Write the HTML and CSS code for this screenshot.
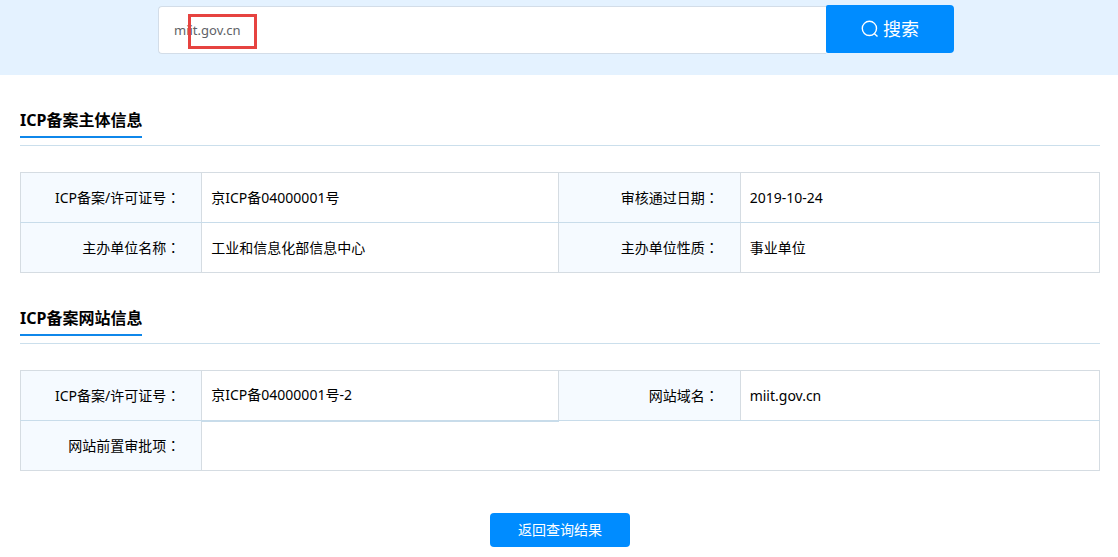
FILE: index.html
```
<!DOCTYPE html>
<html lang="zh-CN">
<head>
<meta charset="utf-8">
<title>ICP备案查询</title>
<link rel="stylesheet" href="styles.css">
</head>
<body>
<header class="search-bar">
  <form class="search-form">
    <input class="search-input" type="text" value="miit.gov.cn" aria-label="搜索">
    <button class="search-button" type="button">
      <svg class="search-icon" viewBox="0 0 18 18" aria-hidden="true"><circle cx="8.4" cy="8.4" r="7.1"/><path d="M13.2 13.4l3.3 3.2"/></svg>
      <span>搜索</span>
    </button>
    <span class="highlight"></span>
  </form>
</header>
<main class="content">
  <section class="block">
    <div class="block-head"><h2 class="block-title">ICP备案主体信息</h2></div>
    <table class="info">
      <colgroup><col class="col-label"><col class="col-value"><col class="col-label"><col></colgroup>
      <tr>
        <th scope="row">ICP备案/许可证号<span class="colon" lang="zh-TW">：</span></th><td>京ICP备04000001号</td>
        <th scope="row">审核通过日期<span class="colon" lang="zh-TW">：</span></th><td>2019-10-24</td>
      </tr>
      <tr>
        <th scope="row">主办单位名称<span class="colon" lang="zh-TW">：</span></th><td>工业和信息化部信息中心</td>
        <th scope="row">主办单位性质<span class="colon" lang="zh-TW">：</span></th><td>事业单位</td>
      </tr>
    </table>
  </section>
  <section class="block">
    <div class="block-head"><h2 class="block-title">ICP备案网站信息</h2></div>
    <table class="info">
      <colgroup><col class="col-label"><col class="col-value"><col class="col-label"><col></colgroup>
      <tr>
        <th scope="row">ICP备案/许可证号<span class="colon" lang="zh-TW">：</span></th><td class="thick">京ICP备04000001号-2</td>
        <th scope="row">网站域名<span class="colon" lang="zh-TW">：</span></th><td>miit.gov.cn</td>
      </tr>
      <tr>
        <th scope="row">网站前置审批项<span class="colon" lang="zh-TW">：</span></th><td colspan="3"></td>
      </tr>
    </table>
  </section>
  <div class="actions"><button class="back-button" type="button">返回查询结果</button></div>
</main>
</body>
</html>
```
FILE: styles.css
```
* { box-sizing: border-box; }
body {
  margin: 0;
  background: #fff;
  color: #000;
  font: 14px/20px "Noto Sans", "Noto Sans CJK SC", sans-serif;
}
button, input { font: inherit; }
.search-bar {
  padding: 5px 6px 21px 0;
  background: #e4f2ff;
}
.search-form {
  position: relative;
  display: flex;
  align-items: stretch;
  max-width: 796px;
  margin: 0 auto;
}
.search-input {
  flex: 1;
  min-width: 0;
  height: 48px;
  margin-top: 1px;
  padding: 0 15px;
  border: 1px solid #d3dde8;
  border-right: 0;
  border-radius: 4px 0 0 4px;
  background: #fff;
  color: #606266;
  font-size: 13px;
  outline: 0;
}
.search-button {
  display: flex;
  align-items: center;
  justify-content: center;
  gap: 4px;
  width: 128px;
  height: 48px;
  padding: 0;
  border: 0;
  border-radius: 2px 4px 4px 2px;
  background: #008cff;
  color: #fff;
  font-size: 18px;
  line-height: 24px;
}
.search-icon {
  width: 18px;
  height: 18px;
  fill: none;
  stroke: #fff;
  stroke-width: 1.4;
}
.highlight {
  position: absolute;
  left: 30px;
  top: 9px;
  width: 69px;
  height: 35px;
  border: 3px solid #e64340;
  pointer-events: none;
}
.content { padding: 26px 18px 10px 20px; }
.block { margin-bottom: 26px; }
.block-head {
  display: flex;
  height: 45px;
  margin-bottom: 26px;
  border-bottom: 1px solid #cbdfec;
}
.block-title {
  height: 37px;
  margin: 0;
  padding-top: 7px;
  border-bottom: 2px solid #0f87ea;
  font-size: 16px;
  line-height: 24px;
}
.info {
  width: 100%;
  table-layout: fixed;
  border-collapse: collapse;
}
.col-label { width: 16.8%; }
.col-value { width: 33.1%; }
.info th, .info td {
  height: 50px;
  border: 1px solid #d5dce2;
  font-weight: 400;
}
.info tr:first-child > * { border-bottom-color: #c8dcea; }
.info th {
  padding: 0 21px 0 0;
  background: #f5faff;
  text-align: right;
}
.info td {
  padding: 0 9px;
  text-align: left;
}
.info .thick { border-bottom-width: 2px; }
.colon { font-family: "Noto Sans CJK TC", sans-serif; }
.actions {
  display: flex;
  justify-content: center;
  padding-top: 16px;
}
.back-button {
  width: 140px;
  height: 34px;
  padding: 0;
  border: 0;
  border-radius: 4px;
  background: #008cff;
  color: #fff;
}
```
